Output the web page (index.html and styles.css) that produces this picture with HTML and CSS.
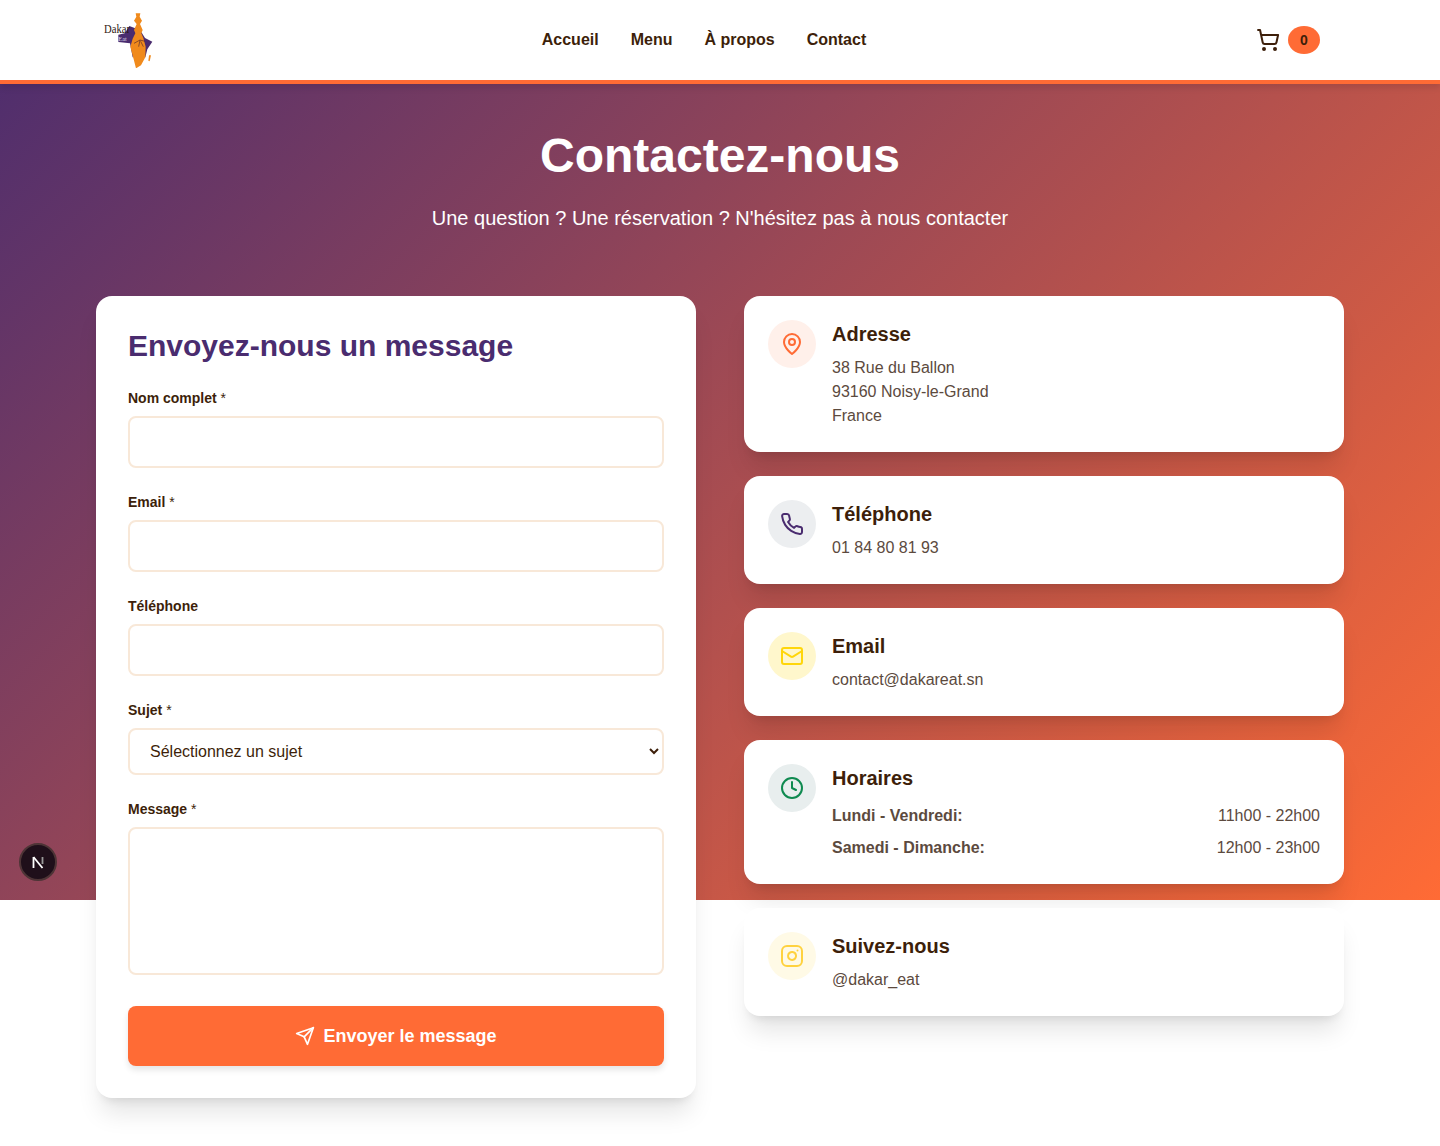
FILE: index.html
```html
<!DOCTYPE html>
<html lang="fr">
    <head>
        <meta charset="UTF-8">
        <meta name="viewport" content="width=device-width, initial-scale=1.0">
        <title>Contactez-nous</title>
        <link rel="stylesheet" href="styles.css">
    </head>
    <body>
        <header class="site-header">
            <a class="logo" href="#">
                <svg class="logo-mark" viewBox="18 36 171 168">
                    <!-- Afrique -->
                    <path class="logo-africa" d="M85 104 L104 100 L118 78 L150 90 L165 114 L187 125 L172 148 L166 172 L128 172 L120 130 L85 126 Z"/>
                    <!-- Silhouette -->
                    <path class="logo-figure" d="M137 40 H151 L149 50 L156 62 L150 72 L158 90 L154 100 L160 114 L167 140 L166 172 L153 196 L138 205 L131 178 L121 140 L128 116 L136 100 L132 90 L140 72 L132 62 L139 50 Z"/>
                    <path class="logo-figure" d="M177 166 L183 166 L179 184 L175 182 Z"/>
                    <path class="logo-streak" d="M132 130 L150 120 L165 124 M150 120 L146 140 M152 124 L160 140"/>
                    <text class="logo-word" x="42" y="100" textLength="78" lengthAdjust="spacingAndGlyphs">Dakar</text>
                    <text class="logo-word-small" x="85" y="123" textLength="25" lengthAdjust="spacingAndGlyphs">Eat</text>
                </svg>
            </a>
            <nav class="main-nav">
                <a href="#">Accueil</a>
                <a href="#">Menu</a>
                <a href="#">À propos</a>
                <a href="#">Contact</a>
            </nav>
            <div class="cart">
                <svg class="icon cart-icon" viewBox="0 0 24 24"><circle cx="8" cy="21" r="1"/><circle cx="19" cy="21" r="1"/><path d="M2.05 2.05h2l2.66 12.42a2 2 0 0 0 2 1.58h9.78a2 2 0 0 0 1.95-1.57l1.65-7.43H5.12"/></svg>
                <span class="cart-badge">0</span>
            </div>
        </header>

        <main class="page">
            <section class="intro">
                <h1>Contactez-nous</h1>
                <p>Une question ? Une réservation ? N'hésitez pas à nous contacter</p>
            </section>

            <div class="contact-grid">
                <form class="card form-card">
                    <h2>Envoyez-nous un message</h2>
                    <div class="form-group">
                        <label for="name">Nom complet <span>*</span></label>
                        <input id="name" type="text">
                    </div>
                    <div class="form-group">
                        <label for="email">Email <span>*</span></label>
                        <input id="email" type="email">
                    </div>
                    <div class="form-group">
                        <label for="phone">Téléphone</label>
                        <input id="phone" type="tel">
                    </div>
                    <div class="form-group">
                        <label for="subject">Sujet <span>*</span></label>
                        <select id="subject">
                            <option>Sélectionnez un sujet</option>
                        </select>
                    </div>
                    <div class="form-group">
                        <label for="message">Message <span>*</span></label>
                        <textarea id="message"></textarea>
                    </div>
                    <button type="button" class="submit-button">
                        <svg class="icon" viewBox="0 0 24 24"><path d="m22 2-7 20-4-9-9-4Z"/><path d="M22 2 11 13"/></svg>
                        Envoyer le message
                    </button>
                </form>

                <div class="info-column">
                    <div class="card info-card">
                        <div class="info-icon icon-orange">
                            <svg class="icon" viewBox="0 0 24 24"><path d="M20 10c0 6-8 12-8 12s-8-6-8-12a8 8 0 0 1 16 0Z"/><circle cx="12" cy="10" r="3"/></svg>
                        </div>
                        <div class="info-body">
                            <h3>Adresse</h3>
                            <p>38 Rue du Ballon<br>93160 Noisy-le-Grand<br>France</p>
                        </div>
                    </div>
                    <div class="card info-card">
                        <div class="info-icon icon-purple">
                            <svg class="icon" viewBox="0 0 24 24"><path d="M22 16.92v3a2 2 0 0 1-2.18 2 19.79 19.79 0 0 1-8.63-3.07 19.5 19.5 0 0 1-6-6 19.79 19.79 0 0 1-3.07-8.67A2 2 0 0 1 4.11 2h3a2 2 0 0 1 2 1.72 12.84 12.84 0 0 0 .7 2.81 2 2 0 0 1-.45 2.11L8.09 9.91a16 16 0 0 0 6 6l1.27-1.27a2 2 0 0 1 2.11-.45 12.84 12.84 0 0 0 2.81.7A2 2 0 0 1 22 16.92z"/></svg>
                        </div>
                        <div class="info-body">
                            <h3>Téléphone</h3>
                            <p>01 84 80 81 93</p>
                        </div>
                    </div>
                    <div class="card info-card">
                        <div class="info-icon icon-yellow">
                            <svg class="icon" viewBox="0 0 24 24"><rect x="2" y="4" width="20" height="16" rx="2"/><path d="m22 7-8.97 5.7a1.94 1.94 0 0 1-2.06 0L2 7"/></svg>
                        </div>
                        <div class="info-body">
                            <h3>Email</h3>
                            <p>contact@dakareat.sn</p>
                        </div>
                    </div>
                    <div class="card info-card">
                        <div class="info-icon icon-green">
                            <svg class="icon" viewBox="0 0 24 24"><circle cx="12" cy="12" r="10"/><polyline points="12 6 12 12 16 14"/></svg>
                        </div>
                        <div class="info-body">
                            <h3 class="hours-title">Horaires</h3>
                            <div class="hours-row"><strong>Lundi - Vendredi:</strong><span>11h00 - 22h00</span></div>
                            <div class="hours-row"><strong>Samedi - Dimanche:</strong><span>12h00 - 23h00</span></div>
                        </div>
                    </div>
                    <div class="card info-card">
                        <div class="info-icon icon-pale-yellow">
                            <svg class="icon" viewBox="0 0 24 24"><rect x="2" y="2" width="20" height="20" rx="5"/><path d="M16 11.37A4 4 0 1 1 12.63 8 4 4 0 0 1 16 11.37z"/><line x1="17.5" y1="6.5" x2="17.51" y2="6.5"/></svg>
                        </div>
                        <div class="info-body">
                            <h3>Suivez-nous</h3>
                            <p>@dakar_eat</p>
                        </div>
                    </div>
                </div>
            </div>
        </main>

        <button type="button" class="dev-badge">
            <svg viewBox="0 0 16 16"><path class="dev-n-left" d="M3.5 14V3"/><path class="dev-n-diag" d="M3.5 3 12.5 14"/><path class="dev-n-right" d="M12.5 3v7"/></svg>
        </button>
    </body>
</html>
```

FILE: styles.css
```css
* {
    box-sizing: border-box;
}
/* Le degrade couvre les 900 premiers pixels, les cartes debordent en dessous */
body {
    margin: 0;
    font-family: "Liberation Sans", Arial, sans-serif;
    font-size: 16px;
    line-height: 24px;
    color: #3d1f0a;
    background-color: #fff;
    background-image: linear-gradient(135deg, #4a2c6f 0%, #ff6b35 100%);
    background-size: 100% 900px;
    background-repeat: no-repeat;
}
a {
    color: inherit;
    text-decoration: none;
}
.icon {
    width: 24px;
    height: 24px;
    fill: none;
    stroke: currentColor;
    stroke-width: 2;
    stroke-linecap: round;
    stroke-linejoin: round;
    flex-shrink: 0;
}

/* Header */
.site-header {
    position: relative;
    z-index: 2;
    display: flex;
    align-items: center;
    justify-content: space-between;
    height: 84px;
    padding: 0 120px 0 96px;
    background-color: #fff;
    border-bottom: 4px solid #ff6b35;
    box-shadow: 0 4px 6px rgba(0, 0, 0, 0.1);
}
.logo {
    display: block;
    width: 56px;
    height: 56px;
}
.logo-mark {
    display: block;
    width: 57px;
    height: 56px;
}
.logo-africa {
    fill: #4a2c6f;
}
.logo-figure {
    fill: #f08a1c;
}
.logo-streak {
    fill: none;
    stroke: #5a2c2a;
    stroke-width: 2;
}
.logo-word {
    font-family: "Liberation Serif", serif;
    font-size: 36px;
    fill: #2d1a12;
}
.logo-word-small {
    font-family: "Liberation Serif", serif;
    font-size: 18px;
    fill: #ddd6e6;
}
.main-nav {
    display: flex;
    gap: 32px;
    font-weight: 700;
}
.cart {
    display: flex;
    align-items: center;
    gap: 8px;
}
.cart-badge {
    width: 32px;
    height: 28px;
    border-radius: 50%;
    background-color: #ff6b35;
    font-size: 14px;
    font-weight: 700;
    line-height: 28px;
    text-align: center;
}

.page {
    padding: 48px 96px 48px;
}
.intro {
    margin-bottom: 64px;
    color: #fff;
    text-align: center;
}
.intro h1 {
    margin: 0 0 24px;
    font-size: 48px;
    line-height: 48px;
}
.intro p {
    margin: 0;
    font-size: 20px;
    line-height: 28px;
}
.contact-grid {
    display: grid;
    grid-template-columns: 1fr 1fr;
    gap: 48px;
    align-items: start;
}
.card {
    background-color: #fff;
    border-radius: 16px;
    box-shadow: 0 20px 25px -5px rgba(0, 0, 0, 0.1), 0 8px 10px -6px rgba(0, 0, 0, 0.1);
}

/* Formulaire */
.form-card {
    padding: 32px;
}
.form-card h2 {
    margin: 0 0 24px;
    font-size: 30px;
    line-height: 36px;
    color: #4a2c6f;
}
.form-group {
    margin-bottom: 24px;
}
.form-group label {
    display: block;
    margin-bottom: 8px;
    font-size: 14px;
    font-weight: 700;
    line-height: 20px;
}
.form-group label span {
    font-weight: 400;
}
input,
select,
textarea {
    display: block;
    width: 100%;
    border: 2px solid #f8e8d8;
    border-radius: 8px;
    padding: 12px 16px;
    font-family: inherit;
    font-size: 16px;
    color: #3d1f0a;
    background-color: #fff;
}
input {
    height: 52px;
}
select {
    height: 47px;
}
textarea {
    height: 148px;
    resize: none;
}
.submit-button {
    display: flex;
    align-items: center;
    justify-content: center;
    gap: 8px;
    width: 100%;
    height: 60px;
    margin-top: 31px;
    border: none;
    border-radius: 8px;
    background-color: #ff6b35;
    color: #fff;
    font-family: inherit;
    font-size: 18px;
    font-weight: 700;
    box-shadow: 0 4px 6px rgba(0, 0, 0, 0.1);
    cursor: pointer;
}
.submit-button .icon {
    width: 20px;
    height: 20px;
}

/* Infos */
.info-column {
    display: flex;
    flex-direction: column;
    gap: 24px;
}
.info-card {
    display: flex;
    gap: 16px;
    padding: 24px;
}
.info-icon {
    display: flex;
    align-items: center;
    justify-content: center;
    width: 48px;
    height: 48px;
    border-radius: 50%;
    flex-shrink: 0;
}
.icon-orange {
    color: #ff6b35;
    background-color: #fff0ea;
}
.icon-purple {
    color: #4a2c6f;
    background-color: #eceef0;
}
.icon-yellow {
    color: #ffd60a;
    background-color: #fff7cc;
}
.icon-green {
    color: #0f8a50;
    background-color: #e8eeee;
}
.icon-pale-yellow {
    color: #ffd23f;
    background-color: #fffae6;
}
.info-body {
    flex: 1;
}
.info-body h3 {
    margin: 0 0 8px;
    font-size: 20px;
    line-height: 28px;
}
.info-body .hours-title {
    margin-bottom: 12px;
}
.info-body p {
    margin: 0;
    color: #5c4a3e;
}
.hours-row {
    display: flex;
    justify-content: space-between;
    color: #5c4a3e;
}
.hours-row + .hours-row {
    margin-top: 8px;
}

/* Badge Next.js */
.dev-badge {
    position: absolute;
    left: 19px;
    top: 843px;
    z-index: 3;
    display: flex;
    align-items: center;
    justify-content: center;
    width: 38px;
    height: 38px;
    padding: 0;
    border: 2px solid #4d3436;
    border-radius: 50%;
    background-color: #1f0f1a;
}
.dev-badge svg {
    width: 16px;
    height: 16px;
    fill: none;
    stroke-width: 1.8;
}
.dev-n-left,
.dev-n-diag {
    stroke: #fff;
}
.dev-n-right {
    stroke: #999;
}
```
